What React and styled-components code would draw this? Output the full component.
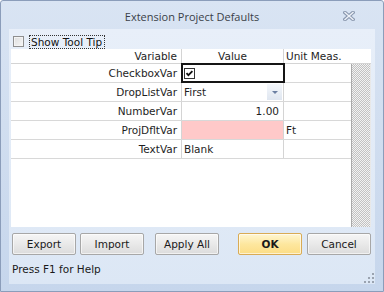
import React from "react";
import styled, { createGlobalStyle } from "styled-components";

const GlobalStyle = createGlobalStyle`
  html, body {
    margin: 0;
    padding: 0;
    background: #ffffff;
  }
  body {
    font-family: "DejaVu Sans", "Liberation Sans", sans-serif;
    font-size: 10.5px;
    color: #1e1e1e;
  }
`;

// window frame
const Window = styled.div`
  position: relative;
  width: 384px;
  height: 292px;
  box-sizing: border-box;
  display: flex;
  flex-direction: column;
  border: 1px solid #8b9dba;
  border-radius: 3px 3px 0 0;
  background: linear-gradient(#d9e4f3, #c6d6ec);
  padding: 0 8px 7px 8px;
`;

const TitleBar = styled.div`
  height: 28px;
  display: grid;
  grid-template-columns: 1fr auto 1fr;
  align-items: center;
`;

const Title = styled.div`
  grid-column: 2;
  font-family: "Open Sans", "Liberation Sans", sans-serif;
  font-size: 11px;
  color: #3a3f48;
  padding-top: 2px;
`;

const CloseButton = styled.div`
  grid-column: 3;
  justify-self: end;
  width: 12px;
  height: 10px;
  margin-right: 20px;
  margin-top: 2px;
  display: flex;
`;

const Content = styled.div`
  flex: 1;
  display: flex;
  flex-direction: column;
  background: linear-gradient(#e8eff9, #dce7f5);
`;

const TipRow = styled.div`
  display: flex;
  align-items: center;
  height: 13px;
  margin: 6px 0 1px 4px;
`;

const TipBox = styled.div`
  width: 11px;
  height: 11px;
  box-sizing: border-box;
  border: 1px solid #8f8f8f;
  background: linear-gradient(135deg, #dedede, #f6f6f6);
  box-shadow: inset 0 0 0 1px #f4f4f4;
`;

const TipLabel = styled.div`
  margin-left: 5px;
  height: 14px;
  line-height: 12px;
  padding: 0 2px 0 1px;
  box-sizing: border-box;
  border: 1px dotted #333;
  color: #111;
`;

// property grid
const Grid = styled.div`
  margin: 0 4px 0 2px;
  height: 178px;
  display: flex;
  flex-direction: column;
  background: #ffffff;
`;

const HeaderRow = styled.div`
  display: flex;
  height: 15px;
  box-sizing: border-box;
  border-bottom: 1px solid #d4d4d4;
`;

const Cell = styled.div`
  box-sizing: border-box;
  width: ${(p) => (p.$w ? `${p.$w}px` : "auto")};
  flex: ${(p) => (p.$w ? "none" : 1)};
  display: flex;
  align-items: center;
  justify-content: ${(p) =>
    p.$align === "right" ? "flex-end" : p.$align === "center" ? "center" : "flex-start"};
  padding: ${(p) => (p.$align === "right" ? "0 4px 0 0" : "0 2px 0 2px")};
  border-right: ${(p) => (p.$last ? "none" : "1px solid #d4d4d4")};
  background: ${(p) => p.$bg || "transparent"};
  position: relative;
  white-space: nowrap;
  ${(p) => p.$focus && "outline: 2px solid #151515; outline-offset: -1px; z-index: 1;"}
`;

const GridBody = styled.div`
  flex: 1;
  display: flex;
`;

const Rows = styled.div`
  flex: 1;
  display: flex;
  flex-direction: column;
`;

const Row = styled.div`
  display: flex;
  height: 19px;
  box-sizing: border-box;
  border-bottom: 1px solid #d8d8d8;
`;

const ScrollTrack = styled.div`
  width: 20px;
  box-sizing: border-box;
  border-left: 1px solid #a9a9a9;
  border-right: 1px solid #e8e8e8;
  background: repeating-conic-gradient(#c2c2c2 0 25%, #f2f2f2 0 50%) 0 0 / 2px 2px;
`;

const DropButton = styled.div`
  position: absolute;
  right: 1px;
  top: 1px;
  bottom: 1px;
  width: 15px;
  display: flex;
  align-items: center;
  justify-content: center;
  background: linear-gradient(#f4f7fb, #dfe6f0);
`;

const Arrow = styled.div`
  width: 0;
  height: 0;
  border-left: 3px solid transparent;
  border-right: 3px solid transparent;
  border-top: 3px solid #6b7fa2;
`;

// buttons
const ButtonBar = styled.div`
  display: flex;
  margin-top: 6px;
  height: 22px;
`;

const Button = styled.div`
  width: 64px;
  height: 22px;
  box-sizing: border-box;
  margin-left: ${(p) => p.$space}px;
  display: flex;
  align-items: center;
  justify-content: center;
  border: 1px solid ${(p) => (p.$primary ? "#d9ab55" : "#a7a7a7")};
  border-radius: 2px;
  background: ${(p) =>
    p.$primary
      ? "linear-gradient(#fff6d2, #fde79f 50%, #fcdd85)"
      : "linear-gradient(#f6f6f6, #e9e9e9 50%, #dcdcdc)"};
  box-shadow: inset 0 0 0 1px rgba(255, 255, 255, 0.6);
  font-weight: ${(p) => (p.$primary ? "bold" : "normal")};
  color: #1a1a1a;
`;

const Status = styled.div`
  margin: 8px 0 0 3px;
  color: #1a1a1a;
`;

const Grip = styled.div`
  position: absolute;
  right: 9px;
  bottom: 8px;
  width: 10px;
  height: 10px;
  display: flex;
`;

const rows = [
  { name: "CheckboxVar", kind: "check" },
  { name: "DropListVar", kind: "drop", value: "First" },
  { name: "NumberVar", kind: "number", value: "1.00" },
  { name: "ProjDfltVar", kind: "pink", unit: "Ft" },
  { name: "TextVar", kind: "text", value: "Blank" },
];

const CheckIcon = () => (
  <svg width="11" height="11" viewBox="0 0 11 11">
    <rect x="0.5" y="0.5" width="10" height="10" fill="#fff" stroke="#333" />
    <path d="M2.5 5.2 L4.4 7.2 L8.4 3.2" fill="none" stroke="#111" strokeWidth="1.8" />
  </svg>
);

const ValueCell = ({ row }) => {
  if (row.kind === "check")
    return (
      <Cell $w={102} $focus>
        <CheckIcon />
      </Cell>
    );
  if (row.kind === "drop")
    return (
      <Cell $w={102}>
        {row.value}
        <DropButton>
          <Arrow />
        </DropButton>
      </Cell>
    );
  if (row.kind === "number")
    return (
      <Cell $w={102} $align="right">
        {row.value}
      </Cell>
    );
  if (row.kind === "pink") return <Cell $w={102} $bg="#ffc9c9" />;
  return <Cell $w={102}>{row.value}</Cell>;
};

export default function App() {
  return (
    <>
      <GlobalStyle />
      <Window>
        <TitleBar>
          <Title>Extension Project Defaults</Title>
          <CloseButton>
            <svg width="12" height="10" viewBox="0 0 12 10">
              <path d="M2 1.5 L10 8.5 M10 1.5 L2 8.5" stroke="#8b99b0" strokeWidth="3.6" strokeLinecap="square" />
              <path d="M2 1.5 L10 8.5 M10 1.5 L2 8.5" stroke="#eef2f8" strokeWidth="1.4" strokeLinecap="square" />
            </svg>
          </CloseButton>
        </TitleBar>
        <Content>
          <TipRow>
            <TipBox />
            <TipLabel>Show Tool Tip</TipLabel>
          </TipRow>
          <Grid>
            <HeaderRow>
              <Cell $w={171} $align="right">Variable</Cell>
              <Cell $w={102} $align="center">Value</Cell>
              <Cell $last>Unit Meas.</Cell>
            </HeaderRow>
            <GridBody>
              <Rows>
                {rows.map((r) => (
                  <Row key={r.name}>
                    <Cell $w={171} $align="right">{r.name}</Cell>
                    <ValueCell row={r} />
                    <Cell $last>{r.unit}</Cell>
                  </Row>
                ))}
              </Rows>
              <ScrollTrack />
            </GridBody>
          </Grid>
          <ButtonBar>
            <Button $space={3}>Export</Button>
            <Button $space={4}>Import</Button>
            <Button $space={11}>Apply All</Button>
            <Button $space={19} $primary>OK</Button>
            <Button $space={5}>Cancel</Button>
          </ButtonBar>
          <Status>Press F1 for Help</Status>
        </Content>
        <Grip>
          <svg width="10" height="10" viewBox="0 0 10 10" fill="#9aa3b0">
            <rect x="8" y="0" width="2" height="2" />
            <rect x="4" y="4" width="2" height="2" />
            <rect x="8" y="4" width="2" height="2" />
            <rect x="0" y="8" width="2" height="2" />
            <rect x="4" y="8" width="2" height="2" />
            <rect x="8" y="8" width="2" height="2" />
          </svg>
        </Grip>
      </Window>
    </>
  );
}
